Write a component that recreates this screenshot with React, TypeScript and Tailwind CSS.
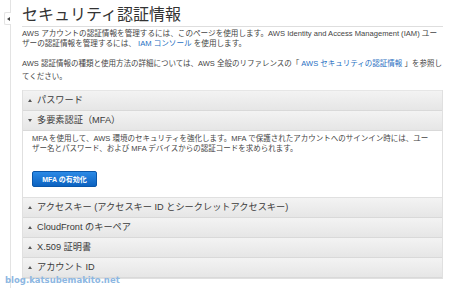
const font = { fontFamily: '"Liberation Sans", "Noto Sans CJK JP", sans-serif' };

function Arrow({ open }: { open?: boolean }) {
  return (
    <svg width="4" height="3" viewBox="0 0 4 3" className="mr-[5px] shrink-0">
      {open ? <path d="M0 0 L4 0 L2 3 Z" fill="#555" /> : <path d="M0 3 L4 3 L2 0 Z" fill="#555" />}
    </svg>
  );
}

function Row({ label, open }: { label: string; open?: boolean }) {
  return (
    <div className="flex h-[20px] items-center border-b border-[#d9d9d9] bg-gradient-to-b from-[#f3f3f3] to-[#e6e6e6] pl-[5px] text-[9.2px] text-[#3a3a3a]">
      <Arrow open={open} />
      <span className="leading-none">{label}</span>
    </div>
  );
}

export default function App() {
  return (
    <div className="relative flex h-[288px] w-[450px] overflow-hidden bg-white" style={font}>
      <div className="w-[11px] shrink-0 border-r border-[#e3e3e3]" />
      <div className="absolute left-[4px] top-[12px] flex h-[13px] w-[7px] items-center justify-end rounded-l-[2px] border border-r-0 border-[#e3e3e3] bg-white pr-[1px]">
        <svg width="3" height="4" viewBox="0 0 3 4">
          <path d="M3 0 L3 4 L0 2 Z" fill="#444" />
        </svg>
      </div>

      <div className="flex min-w-0 flex-1 flex-col pl-[11px] pr-[7px]">
        <h1 className="border-b border-[#dedede] pb-[1px] pt-[5px] text-[16px] font-normal leading-[20px] text-[#333]">
          セキュリティ認証情報
        </h1>
        <p className="mt-[2px] text-[7.6px] leading-[10px] text-[#444]">
          AWS アカウントの認証情報を管理するには、このページを使用します。AWS Identity and Access Management (IAM) ユーザーの認証情報を管理するには、 <span className="inline-block leading-[10px] text-[#1f6fc2]">IAM コンソール</span> を使用します。
        </p>
        <p className="mt-[8px] text-[7.5px] leading-[13px] text-[#444]">
          AWS 認証情報の種類と使用方法の詳細については、AWS 全般のリファレンスの「 <span className="inline-block leading-[13px] text-[#1f6fc2]">AWS セキュリティの認証情報</span> 」を参照してください。
        </p>

        <div className="mt-[7px] border border-t-0 border-[#e0e0e0]">
          <div className="border-t border-[#e6e6e6]" />
          <Row label="パスワード" />
          <Row label="多要素認証（MFA）" open />
          <div className="border-b border-[#e0e0e0] bg-white pb-[10px] pl-[9px] pr-[12px] pt-[3px]">
            <p className="text-[7.5px] leading-[9.5px] text-[#444]">
              MFA を使用して、AWS 環境のセキュリティを強化します。MFA で保護されたアカウントへのサインイン時には、ユーザー名とパスワード、および MFA デバイスからの認証コードを求められます。
            </p>
            <button className="mt-[18px] flex h-[16px] w-[65px] items-center justify-center rounded-[2px] border border-[#0a56a9] bg-gradient-to-b from-[#2b8ae6] to-[#0b62c0] text-[7px] font-bold leading-none text-white">
              MFA の有効化
            </button>
          </div>
          <Row label="アクセスキー (アクセスキー ID とシークレットアクセスキー)" />
          <Row label="CloudFront のキーペア" />
          <Row label="X.509 証明書" />
          <Row label="アカウント ID" />
        </div>
      </div>

      <div
        className="absolute left-[5px] top-[275px] text-[8.5px] font-bold leading-[10px] text-[#8db7e2]"
        style={{ fontFamily: '"DejaVu Sans", sans-serif' }}
      >
        blog.katsubemakito.net
      </div>
    </div>
  );
}
